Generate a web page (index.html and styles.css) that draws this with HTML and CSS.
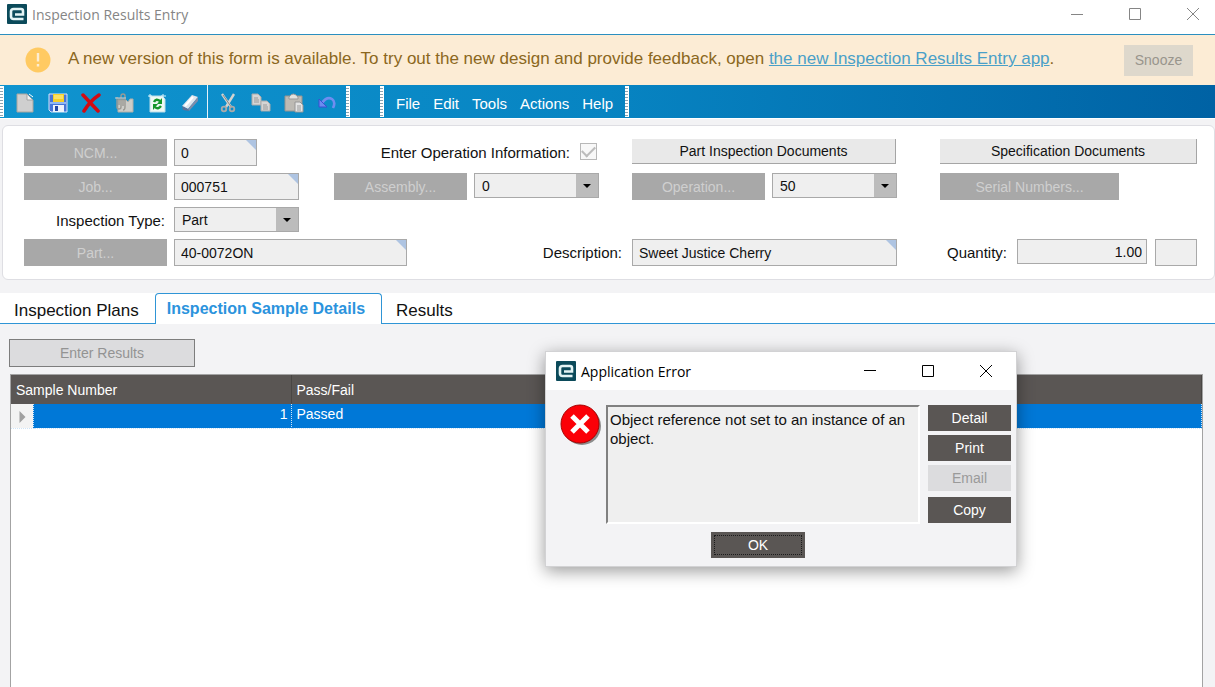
FILE: index.html
```html
<!DOCTYPE html>
<html lang="en">
<head>
    <meta charset="UTF-8">
    <meta name="viewport" content="width=device-width, initial-scale=1.0">
    <title>Inspection Results Entry</title>
    <link rel="stylesheet" href="styles.css">
</head>
<body>
    <header class="titlebar">
        <svg class="logo" viewBox="0 0 20 20"><rect width="20" height="20" rx="1" fill="#0b4a5a"/><path d="M16.500 15H6.500Q4 15 4 12.500V7.500Q4 5 6.500 5H14Q16 5 16 7V10.500H8" fill="none" stroke="#e4f4f5" stroke-width="2.600"/></svg>
        <h1>Inspection Results Entry</h1>
        <div class="window-buttons">
            <button type="button" aria-label="Minimize"><svg viewBox="0 0 14 14"><path d="M1 7.500H13"/></svg></button>
            <button type="button" aria-label="Maximize"><svg viewBox="0 0 14 14"><path d="M1.500 1.500H12.500V12.500H1.500Z"/></svg></button>
            <button type="button" aria-label="Close"><svg viewBox="0 0 14 14"><path d="M1 1L13 13M13 1L1 13"/></svg></button>
        </div>
    </header>

    <div class="banner">
        <svg class="warn" viewBox="0 0 26 26"><circle cx="13" cy="13" r="12.500" fill="#ffca62"/><path d="M13 6V14.500M13 17V19.500" stroke="#fdeed2" stroke-width="2.400"/></svg>
        <p>A new version of this form is available. To try out the new design and provide feedback, open <a href="#">the new Inspection Results Entry app</a>.</p>
        <button type="button" class="snooze">Snooze</button>
    </div>

    <div class="toolbar">
        <span class="grip"></span>
        <div class="tools">
            <button type="button" aria-label="New"><svg viewBox="0 0 20 20"><path d="M2 1H12L18 7V19H2Z" fill="#cfcfcf" stroke="#aaa69e"/><path d="M12 1V7H18Z" fill="#f4f4f4" stroke="#a3a3a3"/><path d="M14 1L18 4" stroke="#fff"/></svg></button>
            <button type="button" aria-label="Save"><svg viewBox="0 0 20 20"><path d="M1 1H19V19H3L1 17Z" fill="#4676d8" stroke="#d8e6fb"/><path d="M5 1H16V9H5Z" fill="#f4cf27"/><path d="M6 3H15M6 5H15" stroke="#fff1a0"/><path d="M5 12H16V19H5Z" fill="#eef3fb"/><path d="M7 13H10V18H7Z" fill="#234aa6"/><path d="M2 10H18" stroke="#8fb7f4" stroke-width="2"/></svg></button>
            <button type="button" aria-label="Delete"><svg viewBox="0 0 20 20"><path d="M2 2L17 18M18 2Q9 8 3 18" fill="none" stroke="#d20b12" stroke-width="3.500" stroke-linecap="round"/></svg></button>
            <button type="button" aria-label="Attachments"><svg viewBox="0 0 20 20"><path d="M4 7H12L14 9L16 6H19V19H4Z" fill="#cdcdc8" stroke="#b0afa8"/><path d="M3 4V14Q3 16 5 16Q7 16 7 14V3Q7 1 9 1Q11 1 11 3V14Q11 17 9 17M5 5V12M9 5V13" fill="none" stroke="#9b9a94" stroke-width="1.400"/><path d="M1 5H12" stroke="#c8d2d6"/></svg></button>
            <button type="button" aria-label="Refresh"><svg viewBox="0 0 20 20"><path d="M3 3H15L18 6V19H3Z" fill="#eff8f3" stroke="#b9dce9"/><path d="M7 9Q9 5 13 8" fill="none" stroke="#15962a" stroke-width="2.400"/><path d="M15 5V11H10Z" fill="#15962a"/><path d="M14 13Q11 17 8 14" fill="none" stroke="#15962a" stroke-width="2.400"/><path d="M6 17V11H11Z" fill="#15962a"/><path d="M16 1V5M14 3H19M3 1V4M1 3H5" stroke="#d9f3fb"/></svg></button>
            <button type="button" aria-label="Clear"><svg viewBox="0 0 20 20"><path d="M2 13L12 2L18 4L8 16Z" fill="#dfe6ee"/><path d="M8 16L18 4V8L9 18Z" fill="#7f8daa"/><path d="M2 13L8 16L9 18L3 17Z" fill="#5d7299"/><path d="M5 13L13 4" stroke="#fff" stroke-width="2"/></svg></button>
        </div>
        <span class="separator"></span>
        <div class="tools">
            <button type="button" aria-label="Cut"><svg viewBox="0 0 20 20"><path d="M4 1L13 14M16 1L8 14" stroke="#d3d3d0" stroke-width="2.400"/><path d="M5 2L14 15" stroke="#888"/><circle cx="6" cy="16" r="2.300" fill="none" stroke="#aaa" stroke-width="1.800"/><circle cx="14" cy="16" r="2.300" fill="none" stroke="#aaa" stroke-width="1.800"/></svg></button>
            <button type="button" aria-label="Copy"><svg viewBox="0 0 20 20"><path d="M1 1H7L10 4V12H1Z" fill="#d5d5d5" stroke="#aaa"/><path d="M3 5H7M3 7H8M3 9H8" stroke="#999"/><path d="M10 8H16L19 11V18H10Z" fill="#d5d5d5" stroke="#aaa"/><path d="M12 12H16M12 14H17M12 16H17" stroke="#999"/></svg></button>
            <button type="button" aria-label="Paste"><svg viewBox="0 0 20 20"><path d="M1 3H18V18H1Z" fill="#bdbab4" stroke="#96938e"/><path d="M5 4Q9 -2 14 4V6H5Z" fill="#e2e2df" stroke="#999"/><path d="M11 9H16L19 12V19H11Z" fill="#e4e4e4" stroke="#969696"/><path d="M13 13H17M13 15H17M13 17H17" stroke="#999"/></svg></button>
            <button type="button" aria-label="Undo"><svg viewBox="0 0 20 20"><path d="M5 10Q10 3 15 6Q19 9 16 15" fill="none" stroke="#6f8df0" stroke-width="2.600"/><path d="M2 6V14H10Z" fill="#6a8cf0" stroke="#3a4fd0"/></svg></button>
        </div>
        <span class="grip"></span>
        <span class="spacer"></span>
        <span class="grip"></span>
        <nav class="menu">
            <a href="#">File</a>
            <a href="#">Edit</a>
            <a href="#">Tools</a>
            <a href="#">Actions</a>
            <a href="#">Help</a>
        </nav>
        <span class="grip"></span>
    </div>

    <form class="panel">
        <button type="button" class="btn" disabled>NCM...</button>
        <div class="field field-small"><input type="text" aria-label="NCM" value="0" readonly></div>
        <div class="check">
            <label for="opInfo">Enter Operation Information:</label>
            <input type="checkbox" id="opInfo" checked disabled>
        </div>
        <button type="button" class="btn-light docs">Part Inspection Documents</button>
        <button type="button" class="btn-light">Specification Documents</button>

        <button type="button" class="btn" disabled>Job...</button>
        <div class="field field-medium"><input type="text" aria-label="Job" value="000751" readonly></div>
        <button type="button" class="btn" disabled>Assembly...</button>
        <div class="combo"><select aria-label="Assembly"><option>0</option></select></div>
        <button type="button" class="btn" disabled>Operation...</button>
        <div class="combo"><select aria-label="Operation"><option>50</option></select></div>
        <button type="button" class="btn serial" disabled>Serial Numbers...</button>

        <label class="type-label" for="inspType">Inspection Type:</label>
        <div class="combo"><select id="inspType"><option>Part</option></select></div>

        <button type="button" class="btn part" disabled>Part...</button>
        <div class="field part-field"><input type="text" aria-label="Part" value="40-0072ON" readonly></div>
        <label class="desc-label" for="desc">Description:</label>
        <div class="field desc-field"><input type="text" id="desc" value="Sweet Justice Cherry" readonly></div>
        <div class="quantity">
            <label for="qty">Quantity:</label>
            <input type="text" id="qty" value="1.00" readonly>
            <input type="text" class="unit" aria-label="Unit" readonly>
        </div>
    </form>

    <nav class="tabs">
        <a href="#" class="tab">Inspection Plans</a>
        <a href="#" class="tab active">Inspection Sample Details</a>
        <a href="#" class="tab last">Results</a>
    </nav>

    <main class="content">
        <button type="button" class="enter" disabled>Enter Results</button>
        <div class="sheet">
            <table>
                <colgroup><col class="col-mark"><col class="col-number"><col></colgroup>
                <thead>
                    <tr><th colspan="2">Sample Number</th><th>Pass/Fail</th></tr>
                </thead>
                <tbody>
                    <tr><td class="mark"><svg viewBox="0 0 6 12"><path d="M0 0L6 6L0 12Z" fill="#a0a0a0"/></svg></td><td class="number">1</td><td>Passed</td></tr>
                </tbody>
            </table>
        </div>
    </main>

    <section class="dialog" role="dialog" aria-labelledby="dialogTitle">
        <header class="dialog-title">
            <svg class="logo" viewBox="0 0 20 20"><rect width="20" height="20" rx="1" fill="#0b4a5a"/><path d="M16.500 15H6.500Q4 15 4 12.500V7.500Q4 5 6.500 5H14Q16 5 16 7V10.500H8" fill="none" stroke="#e4f4f5" stroke-width="2.600"/></svg>
            <h2 id="dialogTitle">Application Error</h2>
            <div class="window-buttons">
                <button type="button" aria-label="Minimize"><svg viewBox="0 0 14 14"><path d="M1 6.500H13"/></svg></button>
                <button type="button" aria-label="Maximize"><svg viewBox="0 0 14 14"><path d="M1.500 1.500H12.500V12.500H1.500Z"/></svg></button>
                <button type="button" aria-label="Close"><svg viewBox="0 0 14 14"><path d="M1 1L13 13M13 1L1 13"/></svg></button>
            </div>
        </header>
        <div class="dialog-body">
            <svg class="error-icon" viewBox="0 0 42 42"><circle cx="22" cy="22" r="19" fill="#8c8c8c"/><circle cx="20" cy="20" r="19" fill="#fb0007" stroke="#a80000"/><path d="M12 12L28 28M28 12L12 28" stroke="#fff" stroke-width="5"/></svg>
            <textarea aria-label="Error message" readonly>Object reference not set to an instance of an object.</textarea>
            <div class="actions">
                <button type="button">Detail</button>
                <button type="button">Print</button>
                <button type="button" disabled>Email</button>
                <button type="button" class="copy">Copy</button>
            </div>
        </div>
        <div class="dialog-footer">
            <button type="button" class="ok">OK</button>
        </div>
    </section>
</body>
</html>
```
FILE: styles.css
```css
* {
    box-sizing: border-box;
}
body {
    display: flex;
    flex-direction: column;
    min-height: 100vh;
    margin: 0;
    background: #f3f3f5;
    color: #111;
    font-family: "Liberation Sans", Arial, sans-serif;
    font-size: 14px;
}
button, input, select, textarea {
    margin: 0;
    padding: 0;
    border: 0;
    border-radius: 0;
    font: inherit;
    color: inherit;
}

/* Title bar */
.titlebar {
    display: flex;
    align-items: center;
    height: 35px;
    padding: 0 7px 6px;
    background: #fff;
    border-bottom: 1px solid #2b8fc0;
    color: #858585;
}
.logo {
    width: 20px;
    height: 20px;
    margin-right: 5px;
}
h1, h2 {
    margin: 0;
    font-family: "Open Sans", sans-serif;
    font-size: 14px;
    font-weight: 400;
}
.window-buttons {
    display: flex;
    gap: 28px;
    margin-left: auto;
}
.window-buttons button {
    display: flex;
    width: 30px;
    justify-content: center;
    background: none;
}
.window-buttons svg {
    width: 14px;
    height: 14px;
    fill: none;
    stroke: currentColor;
}

/* New version banner */
.banner {
    display: flex;
    align-items: center;
    height: 50px;
    padding: 0 22px 0 25px;
    background: #fcecd5;
    color: #8b6720;
    font-size: 17px;
}
.banner p {
    margin: 0 0 2px 17px;
}
.banner a {
    color: #4aa0c8;
}
.warn {
    width: 26px;
    height: 26px;
}
.snooze {
    width: 69px;
    height: 31px;
    margin-left: auto;
    background: #ded8cc;
    color: #99958c;
    font-size: 14px;
}

/* Toolbar */
.toolbar {
    display: flex;
    height: 34px;
    background: linear-gradient(to right, #1094cf, #0784c2 50%, #0062a4);
    border-bottom: 1px solid #fff;
}
.grip {
    width: 4px;
    margin: 1px 0;
    border-right: 1px solid #fff;
    background: repeating-linear-gradient(#fff 0 2px, #8ba3b1 2px 3px);
}
.separator {
    width: 1px;
    background: #e4f2fa;
}
.tools {
    display: flex;
    padding: 2px 1px 0 4px;
}
.separator + .tools {
    padding-right: 3px;
    padding-left: 3px;
}
.tools button {
    display: flex;
    align-items: center;
    justify-content: center;
    width: 33px;
    background: none;
}
.tools svg {
    width: 20px;
    height: 20px;
}
.spacer {
    width: 30px;
}
.menu {
    display: flex;
    align-items: center;
    gap: 13px;
    padding: 4px 12px 0 12px;
    font-size: 15px;
}
.menu a {
    color: #fff;
    text-decoration: none;
}

/* Header form */
.panel {
    display: grid;
    grid-template-columns: 143px 153px 133px 151px 133px 161px minmax(0, 1fr);
    grid-template-rows: 27px 27px 25px 27px;
    gap: 7px;
    align-items: start;
    margin: 6px 0 0 2px;
    padding: 13px 17px 13px 21px;
    background: #fff;
    border: 1px solid #dedee3;
    border-radius: 6px;
}
.panel label {
    font-size: 15px;
    line-height: 27px;
}
.btn {
    height: 27px;
    background: #a8a8a8;
    color: #cfcfcf;
}
.btn-light {
    height: 25px;
    background: #e9e9e9;
    border-right: 1px solid #a5a5a5;
    border-bottom: 1px solid #a5a5a5;
}
.docs {
    grid-column: 5 / span 2;
    width: 264px;
}
.field {
    position: relative;
    height: 27px;
}
.field::after {
    content: "";
    position: absolute;
    top: 1px;
    right: 1px;
    border-top: 10px solid #aec4e2;
    border-left: 10px solid transparent;
}
.field input {
    width: 100%;
    height: 100%;
    padding: 0 6px;
    background: #efefef;
    border: 1px solid #a9a9a9;
}
.field-small {
    width: 83px;
}
.field-medium {
    width: 125px;
}
.check {
    display: flex;
    grid-column: 3 / span 2;
    gap: 10px;
    justify-content: flex-end;
    padding-right: 28px;
}
.check input {
    display: flex;
    appearance: none;
    width: 17px;
    height: 17px;
    margin-top: 4px;
    border: 1px solid #b8b8b8;
    background: #f8f8f8;
}
.check input::before {
    content: "";
    width: 12px;
    height: 6px;
    margin: 2px 1px;
    border-left: 2px solid #bcbcbc;
    border-bottom: 2px solid #bcbcbc;
    transform: rotate(-45deg);
}
.combo {
    position: relative;
    width: 125px;
    height: 25px;
}
.combo select {
    appearance: none;
    width: 100%;
    height: 100%;
    padding: 0 7px;
    background: linear-gradient(to left, #bcbcbc 22px, #efefef 22px);
    border: 1px solid #a9a9a9;
}
.combo::after {
    content: "";
    position: absolute;
    top: 11px;
    right: 8px;
    border-top: 4px solid #000;
    border-left: 4px solid transparent;
    border-right: 4px solid transparent;
}
.serial {
    width: 179px;
}
.type-label {
    text-align: right;
    padding-right: 2px;
}
.part {
    grid-row: 4;
}
.part-field {
    grid-column: 2 / span 2;
    width: 233px;
}
.desc-label {
    grid-column: 4;
    text-align: right;
    padding-right: 3px;
}
.desc-field {
    grid-column: 5 / span 2;
    width: 265px;
}
.quantity {
    display: flex;
    gap: 8px;
    padding-left: 7px;
}
.quantity label {
    width: 62px;
}
.quantity input {
    flex: 1;
    min-width: 0;
    height: 25px;
    padding: 0 4px;
    background: #efefef;
    border: 1px solid #a9a9a9;
    text-align: right;
}
.quantity .unit {
    flex: none;
    width: 42px;
    height: 27px;
}

/* Tabs */
.tabs {
    display: flex;
    height: 31px;
    margin-top: 13px;
    background: #fff;
}
.tab {
    padding: 8px 16px 0 14px;
    border-bottom: 1px solid #2f95d6;
    color: #111;
    font-size: 17px;
    text-decoration: none;
    white-space: nowrap;
}
.active {
    padding: 6px 16px 0 11px;
    border: 1px solid #2f95d6;
    border-bottom: 0;
    border-radius: 4px 4px 0 0;
    background: #fff;
    color: #2b93dd;
    font-size: 16px;
    font-weight: bold;
}
.last {
    flex: 1;
}

/* Sample sheet */
.content {
    display: flex;
    flex: 1;
    flex-direction: column;
    padding: 15px 12px 0 9px;
}
.enter {
    width: 186px;
    height: 28px;
    background: #dcdcde;
    border: 1px solid #7d7d7d;
    color: #939393;
}
.sheet {
    flex: 1;
    margin: 7px 0 0 1px;
    background: #fff;
    border: 1px solid #a3a3a3;
    border-bottom: 0;
}
table {
    width: 100%;
    border-collapse: collapse;
    table-layout: fixed;
    color: #fff;
}
.col-mark {
    width: 22px;
}
.col-number {
    width: 258px;
}
th {
    height: 29px;
    padding: 0 5px;
    background: #5a5654;
    border-right: 1px solid #494644;
    font-weight: 400;
    text-align: left;
}
td {
    height: 24px;
    padding: 0 5px 4px;
    background: #0078d7;
    border-right: 1px dotted #cfe4f7;
    border-bottom: 1px dotted #cfe4f7;
}
.mark {
    padding: 2px 0 0 8px;
    background: #f3f3f3;
}
.mark svg {
    display: block;
    width: 7px;
    height: 12px;
}
.number {
    padding-right: 3px;
    text-align: right;
}

/* Error dialog */
.dialog {
    position: absolute;
    top: 351px;
    left: 545px;
    width: 472px;
    background: #f3f3f5;
    border: 1px solid #d2d2d4;
    box-shadow: 0 4px 16px rgba(0, 0, 0, 0.4);
}
.dialog-title {
    display: flex;
    align-items: center;
    height: 38px;
    padding: 0 15px 0 10px;
    background: #fff;
    color: #000;
}
.dialog-body {
    display: flex;
    padding: 15px 5px 0 14px;
}
.error-icon {
    width: 42px;
    height: 42px;
    margin: -1px 4px 0 0;
}
.dialog textarea {
    flex: 1;
    min-width: 0;
    height: 119px;
    padding: 3px 0 0 2px;
    background: #efefef;
    border: 2px solid #808080;
    border-right-color: #fff;
    border-bottom-color: #fff;
    font-size: 15px;
    line-height: 19px;
    resize: none;
}
.actions {
    display: flex;
    flex-direction: column;
    gap: 4px;
    width: 83px;
    margin-left: 8px;
}
.actions button, .ok {
    height: 26px;
    background: #5a5654;
    color: #fff;
}
.actions button:disabled {
    background: #dcdcde;
    color: #9a9a9a;
}
.actions .copy {
    margin-top: 2px;
}
.dialog-footer {
    display: flex;
    justify-content: center;
    padding: 8px 46px 8px 0;
}
.ok {
    width: 94px;
    outline: 1px dotted #1c1c1c;
    outline-offset: -4px;
}
```
